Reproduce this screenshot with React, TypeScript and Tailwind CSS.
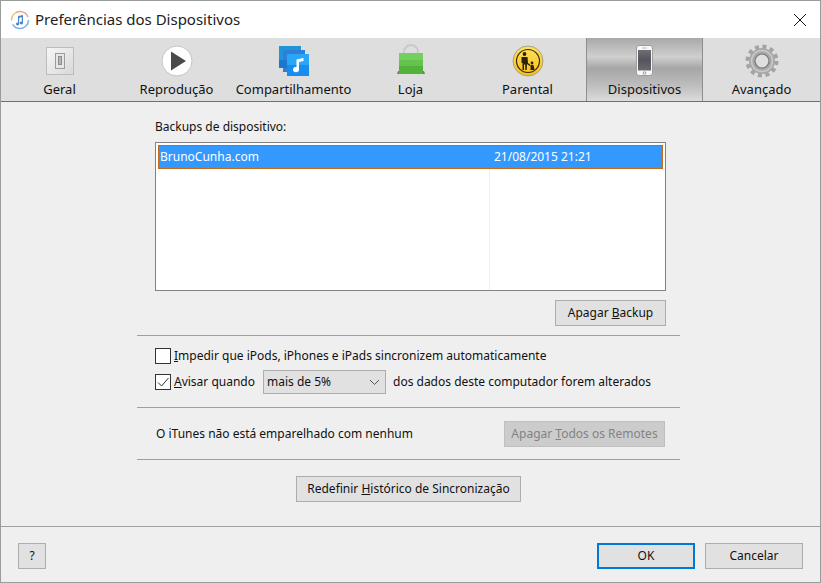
import React from "react";

const UI_FONT = "font-['Noto_Sans','Open_Sans',sans-serif]"

function GeralIcon() {
  return (
    <div className="w-[28px] h-[28px] flex items-center justify-center border border-[#bdbdbd] bg-gradient-to-br from-[#f6f6f6] to-[#d9d9d9]">
      <div className="w-[10px] h-[16px] border border-[#9c9c9c] bg-[#e6e6e6] flex items-center justify-center">
        <div className="w-[4px] h-[9px] bg-[#b5b5b5] border border-[#8d8d8d]"></div>
      </div>
    </div>
  )
}

function PlayIcon() {
  return (
    <svg width="32" height="32" viewBox="0 0 32 32">
      <circle cx="16" cy="16" r="15" fill="#fff" stroke="#c4c4c4" strokeWidth="1" />
      <path d="M10 6.5 L25 16 L10 25.5 Z" fill="#4a4a4a" />
    </svg>
  )
}

function ShareIcon() {
  return (
    <svg width="30" height="30" viewBox="0 0 30 30">
      <rect x="0" y="0" width="22" height="22" fill="#2193d9" />
      <rect x="4" y="4" width="22" height="22" fill="#2f7fd4" />
      <rect x="0" y="14" width="8" height="8" fill="#1c78cf" />
      <rect x="8" y="8" width="22" height="11" fill="#29a6f7" />
      <rect x="8" y="19" width="22" height="11" fill="#188cf0" />
      <path d="M17.5 13.5 L24.5 12 L24.5 15 L20 16 L20 23.5 A3 2.6 0 1 1 17.5 21 Z" fill="#fff" />
    </svg>
  )
}

function BagIcon() {
  return (
    <svg width="28" height="33" viewBox="0 0 28 33">
      <path d="M7 11 V8 A7 7 0 0 1 21 8 V11" fill="none" stroke="#c9c9c9" strokeWidth="2" />
      <path d="M0 30 L1 27 L27 27 L28 30 Z" fill="#5f8f46" />
      <rect x="2" y="9" width="24" height="7" fill="#74d05e" />
      <rect x="2" y="16" width="24" height="6" fill="#64c34f" />
      <rect x="2" y="22" width="24" height="8" fill="#52b23c" />
    </svg>
  )
}

function ParentalIcon() {
  return (
    <svg width="32" height="32" viewBox="0 0 32 32">
      <defs>
        <linearGradient id="parentalFill" x1="0" y1="0" x2="0" y2="1">
          <stop offset="0" stopColor="#ffe35c" />
          <stop offset="1" stopColor="#f5bd1f" />
        </linearGradient>
      </defs>
      <circle cx="16" cy="16" r="15" fill="url(#parentalFill)" stroke="#a9a08a" strokeWidth="1" />
      <circle cx="16" cy="16" r="11.5" fill="none" stroke="#3a2c0c" strokeWidth="1.2" />
      <circle cx="12.5" cy="9" r="1.9" fill="#2b2208" />
      <path d="M9.5 12 H15.5 L16 18 L18.5 20 L17.7 21 L15 19 L14.7 25 H13.2 V19.5 H12 V25 H10.5 V18 H9.5 Z" fill="#2b2208" />
      <circle cx="20" cy="18" r="1.4" fill="#2b2208" />
      <path d="M18.5 20 H21.5 L22.5 25 H18.5 Z" fill="#2b2208" />
    </svg>
  )
}

function PhoneIcon() {
  return (
    <svg width="17" height="31" viewBox="0 0 17 31">
      <defs>
        <linearGradient id="phoneScreen" x1="0" y1="0" x2="0" y2="1">
          <stop offset="0" stopColor="#6d6d72" />
          <stop offset="0.5" stopColor="#55555f" />
          <stop offset="1" stopColor="#6a6a6a" />
        </linearGradient>
      </defs>
      <rect x="0.5" y="0.5" width="16" height="30" rx="2.5" fill="#f7f7f7" stroke="#9d9d9d" />
      <rect x="2" y="5" width="13" height="20.5" fill="url(#phoneScreen)" />
      <circle cx="8.5" cy="28" r="1.3" fill="none" stroke="#9a9a9a" />
      <rect x="6.5" y="2.5" width="4" height="1" fill="#b5b5b5" />
    </svg>
  )
}

function GearIcon() {
  return (
    <svg width="34" height="34" viewBox="0 0 34 34">
      <circle cx="17" cy="17" r="13.5" fill="none" stroke="#a3a3a3" strokeWidth="6" strokeDasharray="3.7 3.37" />
      <circle cx="17" cy="17" r="10" fill="none" stroke="#a8a8a8" strokeWidth="6" />
      <circle cx="17" cy="17" r="10.5" fill="none" stroke="#c9c9c9" strokeWidth="1.5" />
      <circle cx="17" cy="17" r="7" fill="#dedede" stroke="#777" strokeWidth="1.2" />
    </svg>
  )
}

function ItunesIcon() {
  return (
    <svg width="20" height="20" viewBox="0 0 20 20">
      <circle cx="10" cy="10" r="8" fill="#fff" />
      <circle cx="10" cy="10" r="8.5" fill="none" stroke="#e9a590" strokeWidth="1.6" strokeDasharray="14 40" strokeDashoffset="-36" />
      <circle cx="10" cy="10" r="8.5" fill="none" stroke="#f0bd72" strokeWidth="1.6" strokeDasharray="12 42" strokeDashoffset="-26" />
      <circle cx="10" cy="10" r="8.5" fill="none" stroke="#7fb4e6" strokeWidth="1.6" strokeDasharray="22 32" />
      <path d="M8 6 L13 5 V13 A1.6 1.4 0 1 1 11.8 11.7 V7.2 L9.2 7.8 V14 A1.6 1.4 0 1 1 8 12.7 Z" fill="#4b86c9" />
    </svg>
  )
}

function Tab({label, icon, active}: {label: string, icon: React.ReactNode, active?: boolean}) {
  return (
    <div className={`flex flex-col items-center h-[63px] ${active ? "border-x border-[#8e8e8e] bg-[linear-gradient(180deg,#a9a9a9_0%,#cfcfcf_30%,#a6a6a6_48%,#bdbdbd_75%,#dcdcdc_100%)]" : ""}`}>
      <div className="h-[40px] w-full flex items-center justify-center pt-[5px]">{icon}</div>
      <span className="text-[13px] leading-[18px] mt-[2px] text-[#111] whitespace-nowrap">{label}</span>
    </div>
  )
}

function Btn({children, className = "", disabled = false}: {children: React.ReactNode, className?: string, disabled?: boolean}) {
  return (
    <button className={`h-[26px] text-[12px] flex items-center justify-center border ${disabled ? "bg-[#cccccc] border-[#bfbfbf] text-[#838383]" : "bg-[#e1e1e1] border-[#adadad] text-[#111]"} ${className}`}>
      {children}
    </button>
  )
}

const Sep = () => <div className="h-[1px] bg-[#a0a0a0]"></div>

export default function App(){
  const tabs = [
    {label: "Geral", icon: <GeralIcon />},
    {label: "Reprodução", icon: <PlayIcon />},
    {label: "Compartilhamento", icon: <ShareIcon />},
    {label: "Loja", icon: <BagIcon />},
    {label: "Parental", icon: <ParentalIcon />},
    {label: "Dispositivos", icon: <PhoneIcon />, active: true},
    {label: "Avançado", icon: <GearIcon />},
  ]

  return (
    <div className={`w-[821px] h-[583px] flex flex-col border border-[#9b9b9b] bg-[#efefef] overflow-hidden ${UI_FONT}`}>
      {/* title bar */}
      <div className="h-[37px] bg-white flex items-center pl-[9px] pr-[13px] shrink-0">
        <ItunesIcon />
        <span className="ml-[5px] text-[15px] text-[#222] flex-1">Preferências dos Dispositivos</span>
        <svg width="14" height="14" viewBox="0 0 14 14">
          <path d="M1 1 L13 13 M13 1 L1 13" stroke="#111" strokeWidth="1" fill="none" />
        </svg>
      </div>

      {/* toolbar */}
      <div className="grid grid-cols-[117px_117px_117px_117px_117px_117px_1fr] h-[64px] bg-[#dedede] border-b border-[#6f6f6f] shrink-0">
        {tabs.map((tab, index) => <Tab key={index} label={tab.label} icon={tab.icon} active={tab.active} />)}
      </div>

      {/* body */}
      <div className="flex-1 flex flex-col pl-[136px] text-[12px] text-[#111]">
        <div className="w-[543px] flex flex-col">
          <div className="pl-[18px] pr-[14px] pt-[16px]">
            <p className="h-[18px] leading-[18px]">Backups de dispositivo:</p>
            <div className="mt-[6px] h-[149px] border border-[#828282] bg-white p-[2px] relative">
              <div className="h-[24px] flex bg-[#3399ff] border border-[#c8691a] text-white text-[12px] leading-[22px]">
                <span className="w-[333px] pl-[1px]">BrunoCunha.com</span>
                <span className="pl-[2px]">21/08/2015 21:21</span>
              </div>
              <div className="absolute left-[333px] top-[26px] bottom-0 w-[1px] bg-[#efefef]"></div>
            </div>
            <div className="flex justify-end mt-[9px]">
              <Btn className="w-[111px]"><span>Apagar <u>B</u>ackup</span></Btn>
            </div>
          </div>

          <div className="mt-[9px]"><Sep /></div>

          <div className="pl-[18px] pt-[11px] h-[71px]">
            <div className="flex items-center h-[18px]">
              <div className="w-[16px] h-[16px] border border-[#333] bg-white"></div>
              <span className="ml-[3px]"><u>I</u>mpedir que iPods, iPhones e iPads sincronizem automaticamente</span>
            </div>
            <div className="flex items-center h-[24px] mt-[5px]">
              <div className="w-[16px] h-[16px] border border-[#333] bg-white flex items-center justify-center">
                <svg width="14" height="14" viewBox="0 0 14 14">
                  <path d="M2 7.5 L5.5 11 L12.5 3" stroke="#333" strokeWidth="1" fill="none" />
                </svg>
              </div>
              <span className="ml-[3px] w-[89px]"><u>A</u>visar quando</span>
              <div className="w-[123px] h-[24px] bg-[#e1e1e1] border border-[#adadad] flex items-center justify-between pl-[3px] pr-[5px]">
                <span>mais de 5%</span>
                <svg width="11" height="7" viewBox="0 0 11 7">
                  <path d="M1 1 L5.5 5.5 L10 1" stroke="#555" strokeWidth="1" fill="none" />
                </svg>
              </div>
              <span className="ml-[7px]">dos dados deste computador forem alterados</span>
            </div>
          </div>

          <Sep />

          <div className="flex items-center justify-between pl-[19px] pr-[15px] h-[51px]">
            <span className="pt-[1px]">O iTunes não está emparelhado com nenhum</span>
            <Btn disabled className="w-[161px]"><span>Apagar <u>T</u>odos os Remotes</span></Btn>
          </div>

          <Sep />

          <div className="flex justify-center pt-[16px]">
            <Btn className="w-[225px]"><span>Redefinir <u>H</u>istórico de Sincronização</span></Btn>
          </div>
        </div>
      </div>

      {/* footer */}
      <div className="h-[56px] border-t border-[#a0a0a0] flex items-start pt-[16px] pl-[17px] pr-[17px] text-[12px] shrink-0">
        <Btn className="w-[28px]">?</Btn>
        <div className="flex-1"></div>
        <Btn className="w-[98px] border-2 !border-[#0078d7]">OK</Btn>
        <Btn className="w-[98px] ml-[10px]">Cancelar</Btn>
      </div>
    </div>
  )
}
